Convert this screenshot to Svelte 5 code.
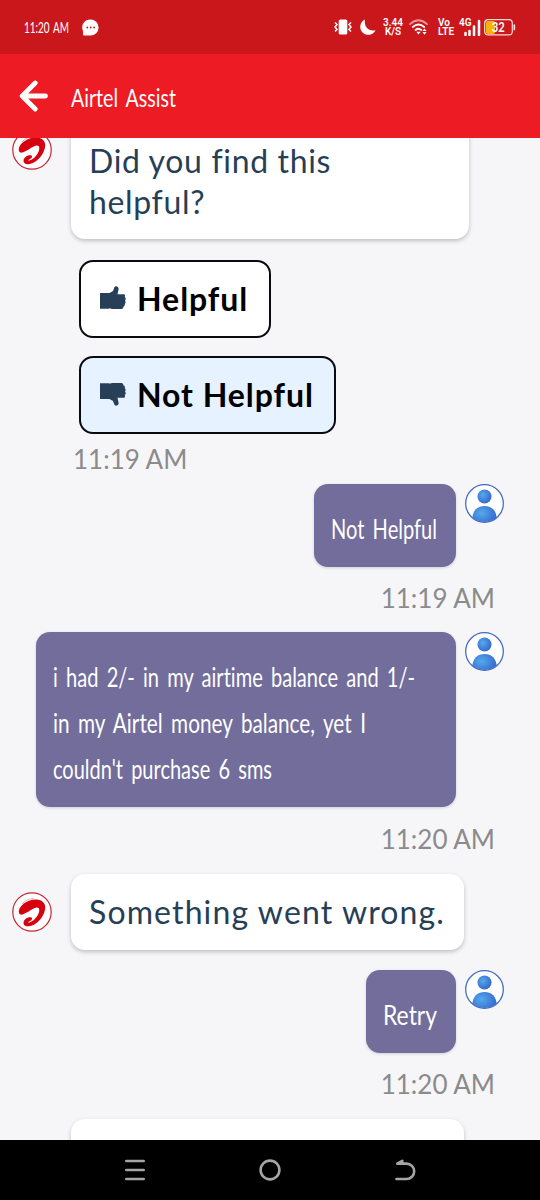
<script lang="ts">
	const narrow = { size: 26, height: 46 };
	const longMessage = [
		{ text: "i had 2/- in my airtime balance and 1/-", width: 362 },
		{ text: "in my Airtel money balance, yet I", width: 313 },
		{ text: "couldn't purchase 6 sms", width: 219 },
	];

	let helpful: boolean | null = $state(false);
</script>

{#snippet line(text: string, width: number, size: number, height: number)}
	<svg class="line" {width} {height}>
		<text
			x="0"
			y={height / 2 + size * 0.33}
			font-size={size}
			textLength={width}
			lengthAdjust="spacingAndGlyphs">{text}</text
		>
	</svg>
{/snippet}

{#snippet airtel()}
	<svg class="avatar" viewBox="0 0 40 40">
		<circle cx="20" cy="20" r="19.2" fill="#fff" stroke="#c9242f" stroke-width="1.2" />
		<path
			d="M7.2 21.6C5.4 17.5 9.7 11.6 17 8.8C24.5 5.9 31.8 7.9 33 13.4C34.5 20.2 27.5 32.1 17.8 34.1C13.6 35 11 33.1 11.6 30C12.1 27.2 15.5 24.8 18.7 25.2C21.3 25.8 20 28.4 17.2 29.4C16 29.8 16 30.9 17.3 30.6C23.4 29 28.6 20.4 27 16.6C24.6 12.8 18 19.6 11.3 22.2C9.3 22.9 7.9 22.9 7.2 21.6Z"
			fill="#d6000f"
		/>
		<path d="M10 12C13 8.5 17 6.8 22 6.5" fill="none" stroke="#dd8990" stroke-width="0.7" />
	</svg>
{/snippet}

{#snippet person(id: string)}
	<svg class="avatar" viewBox="0 0 40 40">
		<defs>
			<radialGradient {id} cx="38%" cy="38%" r="65%">
				<stop offset="0" stop-color="#55aaea" />
				<stop offset="1" stop-color="#3568d0" />
			</radialGradient>
			<clipPath id="{id}-clip"><circle cx="20" cy="20" r="19" /></clipPath>
		</defs>
		<circle cx="20" cy="20" r="19.3" fill="#fff" />
		<g clip-path="url(#{id}-clip)">
			<circle cx="20" cy="12.8" r="7.2" fill="url(#{id})" />
			<path d="M7.5 36C7.5 27 13 22.5 20 22.5S32.5 27 32.5 36V42H7.5Z" fill="url(#{id})" />
		</g>
		<circle cx="20" cy="20" r="19.3" fill="none" stroke="#416bc4" stroke-width="1.3" />
	</svg>
{/snippet}

{#snippet thumb(down: boolean)}
	<svg class="thumb" class:down viewBox="0 0 26 24">
		<path
			d="M0 7H9.5L13 5L14.3 1.5C15 -.4 18.8 0 18.6 3.2L17.5 8.2H23.2C25.2 8.2 25.4 9.6 24.7 10.9C26 11.5 26 13.7 25 14.4C26 15.3 25.7 17.2 24.7 17.9C25.2 19.2 24.6 20.1 23.5 20.4C23.4 22.4 22.3 23 20.5 23H13C11 23 9.9 22 8.7 22.8H0Z"
			fill="#284057"
		/>
	</svg>
{/snippet}

<div class="phone">
	<div class="statusBar">
		<div class="clock">{@render line("11:20 AM", 45, 16, 24)}</div>
		<svg class="bubbleIcon" viewBox="0 0 17 17">
			<path d="M8.5.4A8.1 8.1 0 1 1 8.5 16.6H2Q1 16.6 1 15.6V12A8.1 8.1 0 0 1 8.5.4Z" fill="#fff" />
			<g fill="#ca171b">
				<circle cx="5.3" cy="8.5" r="0.9" />
				<circle cx="8.7" cy="8.5" r="0.9" />
				<circle cx="12.1" cy="8.5" r="0.9" />
			</g>
		</svg>
		<div class="space"></div>
		<svg class="vibrate" viewBox="0 0 18 16">
			<rect x="4.7" y="0.5" width="8.6" height="15" rx="1.6" fill="#fff" />
			<path
				d="M1 3.5L3 5.5L1 8L3 10.5L1 12.5M17 3.5L15 5.5L17 8L15 10.5L17 12.5"
				fill="none"
				stroke="#fff"
				stroke-width="1.5"
			/>
		</svg>
		<svg class="moon" viewBox="0 0 16 16">
			<path d="M5 .5A8 8 0 1 0 15.5 11.2C8.5 13 3.7 7.5 5 .5Z" fill="#fff" />
		</svg>
		<div class="stack speed"><span>3.44</span><span>K/S</span></div>
		<svg class="wifi" viewBox="0 0 19 16">
			<g fill="none" stroke="#fff" stroke-width="1.8" stroke-linecap="round">
				<path d="M1 5.2Q9.5-2.6 18 5.2" opacity=".55" />
				<path d="M3.8 8Q9.5 3 15.2 8M6.5 11Q9.5 8.5 12.3 11" />
			</g>
			<path d="M7.3 12.7H11.7L9.5 15.5ZM13.4 12L15.5 9.5L17.6 12ZM13.4 13H17.6L15.5 15.7Z" fill="#fff" />
		</svg>
		<div class="stack volte"><span>Vo</span><span>LTE</span></div>
		<div class="signal">
			<svg viewBox="0 0 22 17">
				<path
					d="M6.5 14V16M10.5 12V16M15 7.5V16M20 2V16"
					stroke="#fff"
					stroke-width="2.5"
					stroke-linecap="round"
				/>
			</svg>
			<span>4G</span>
		</div>
		<svg class="battery" viewBox="0 0 32 17">
			<rect x="2" y="2" width="9" height="13" rx="1.8" fill="#f9b208" />
			<rect
				x="0.7"
				y="0.7"
				width="27.6"
				height="15.2"
				rx="3.5"
				fill="none"
				stroke="#ffd9d9"
				stroke-width="1.2"
			/>
			<path d="M30.3 6V10.5" stroke="#ffd9d9" stroke-width="1.7" stroke-linecap="round" />
			<text x="7.8" y="13" font-size="13" textLength="13" lengthAdjust="spacingAndGlyphs">32</text>
		</svg>
	</div>

	<header class="titleBar">
		<button class="back" aria-label="Back">
			<svg viewBox="0 0 30 32">
				<path
					d="M16.2 3L3.2 16L16.2 29M4 16H26.5"
					fill="none"
					stroke="#fff"
					stroke-width="4.8"
					stroke-linecap="round"
					stroke-linejoin="round"
				/>
			</svg>
		</button>
		{@render line("Airtel Assist", 105, 25, 40)}
	</header>

	<main class="chat">
		<div class="row bot question">
			{@render airtel()}
			<div class="card">Did you find this<br />helpful?</div>
		</div>

		<div class="choices">
			<button class="choice" class:picked={helpful === true} onclick={() => (helpful = true)}>
				{@render thumb(false)}<span>Helpful</span>
			</button>
			<button class="choice" class:picked={helpful === false} onclick={() => (helpful = false)}>
				{@render thumb(true)}<span>Not Helpful</span>
			</button>
		</div>
		<time class="left">11:19 AM</time>

		<div class="row user short">
			<div class="bubble">{@render line("Not Helpful", 106, narrow.size, narrow.height)}</div>
			{@render person("p1")}
		</div>
		<time>11:19 AM</time>

		<div class="row user long">
			<div class="bubble">
				{#each longMessage as part}
					{@render line(part.text, part.width, narrow.size, narrow.height)}
				{/each}
			</div>
			{@render person("p2")}
		</div>
		<time>11:20 AM</time>

		<div class="row bot error">
			{@render airtel()}
			<div class="card">Something went wrong.</div>
		</div>

		<div class="row user retry">
			<div class="bubble">{@render line("Retry", 54, narrow.size, narrow.height)}</div>
			{@render person("p3")}
		</div>
		<time>11:20 AM</time>

		<div class="card next"></div>
	</main>

	<nav class="navBar">
		<svg viewBox="0 0 24 24">
			<path d="M3.3 3H20.7M3.3 12H20.7M3.3 21H20.7" />
		</svg>
		<svg viewBox="0 0 24 24">
			<circle cx="12" cy="12" r="9.4" />
		</svg>
		<svg viewBox="0 0 24 24">
			<path d="M3.5 21H13.5A7.7 7.7 0 0 0 13.5 5.6H4.2L9.3 2.8V5" />
		</svg>
	</nav>
</div>

<style>
	:global(body) {
		margin: 0;
		background: #f6f6f9;
	}

	.phone {
		width: 540px;
		height: 1200px;
		display: flex;
		flex-direction: column;
		overflow: hidden;

		font-family: Lato, sans-serif;
		background: #f6f6f9;
	}

	svg {
		display: block;
		flex: none;
	}

	button {
		font: inherit;
		padding: 0;
		cursor: pointer;
	}

	.line {
		overflow: visible;
		word-spacing: 4px;
		font-variant-ligatures: none;
	}

	.line text,
	.battery text {
		fill: #fff;
	}

	.battery text {
		font-weight: 700;
	}

	.statusBar {
		height: 54px;
		flex: none;
		box-sizing: border-box;
		padding: 0 24px;
		display: flex;
		align-items: center;

		color: #fff;
		background: #ca171b;
	}

	.clock {
		width: 58px;
		padding-top: 2px;
	}

	.clock .line {
		word-spacing: 2px;
	}

	.bubbleIcon {
		width: 17px;
		height: 17px;
	}

	.space {
		flex: 1;
	}

	.vibrate {
		width: 18px;
		height: 16px;
		margin-right: 8px;
	}

	.moon {
		width: 16px;
		height: 16px;
		margin-right: 7px;
	}

	.stack {
		display: flex;
		flex-direction: column;
		align-items: center;

		font-family: Roboto, sans-serif;
		font-size: 10px;
		font-weight: 600;
		line-height: 9px;
	}

	.speed {
		width: 20px;
		margin-right: 6px;
	}

	.wifi {
		width: 19px;
		height: 16px;
		margin-right: 10px;
	}

	.volte {
		width: 16px;
		align-items: flex-start;
		margin-right: 5px;
	}

	.signal {
		width: 22px;
		height: 17px;
		margin-right: 3px;
		position: relative;
	}

	.signal span {
		position: absolute;
		top: -2px;
		left: 0;

		font-family: Roboto, sans-serif;
		font-size: 10px;
		font-weight: 600;
		line-height: 11px;
	}

	.battery {
		width: 32px;
		height: 17px;
	}

	.titleBar {
		height: 84px;
		flex: none;
		box-sizing: border-box;
		padding: 0 19px;
		display: flex;
		align-items: center;

		background: #ed1c24;
	}

	.titleBar .line {
		margin-top: 6px;
	}

	.back {
		width: 52px;
		border: none;
		background: transparent;
	}

	.back svg {
		width: 30px;
		height: 32px;
	}

	.chat {
		height: 1002px;
		flex: none;
		display: flex;
		flex-direction: column;
		overflow: hidden;
	}

	.row {
		flex: none;
		display: flex;
	}

	.bot {
		align-items: center;
		gap: 19px;
		padding-left: 12px;
	}

	.user {
		justify-content: flex-end;
		gap: 9px;
		padding-right: 36px;
	}

	.avatar {
		width: 40px;
		height: 40px;
	}

	.user .avatar {
		width: 39px;
		height: 39px;
	}

	.card {
		box-sizing: border-box;
		height: 76px;
		padding: 17px 18px;
		border-radius: 14px;

		color: #263f56;
		font-size: 32px;
		line-height: 41px;
		letter-spacing: 1.13px;
		white-space: nowrap;
		background: #fff;
		box-shadow: 0 2px 4px rgba(0, 0, 0, 0.22);
	}

	.question {
		margin-top: -78px;
	}

	.question .card {
		width: 398px;
		height: 179px;
		padding-top: 80px;
		letter-spacing: 0.65px;
	}

	.choices {
		margin: 21px 0 0 79px;
		display: flex;
		flex-direction: column;
		align-items: flex-start;
		gap: 18px;
	}

	.choice {
		width: 192px;
		height: 78px;
		box-sizing: border-box;
		padding: 0 0 2px 19px;
		display: flex;
		align-items: center;
		gap: 11px;

		border: 2px solid #090b10;
		border-radius: 14px;

		color: #000;
		font-size: 32px;
		font-weight: 700;
		letter-spacing: 0.95px;
		white-space: nowrap;
		background: #fff;
	}

	.choice + .choice {
		width: 257px;
	}

	.picked {
		background: #e6f2ff;
	}

	.thumb {
		width: 26px;
		height: 24px;
	}

	.down {
		transform: scaleY(-1);
	}

	time {
		height: 30px;
		flex: none;
		margin-right: 45px;
		text-align: right;

		color: #8b8b8c;
		font-size: 26px;
		line-height: 30px;
	}

	.left {
		margin: 10px 0 0 73px;
		text-align: left;
	}

	.bubble {
		box-sizing: border-box;
		padding: 23px 17px 0;
		border-radius: 14px;
		background: #726d9b;
		box-shadow: 0 1px 3px rgba(60, 50, 90, 0.2);
	}

	.short {
		height: 83px;
		margin: 10px 0 16px;
	}

	.short .bubble {
		width: 142px;
	}

	.long {
		height: 175px;
		margin: 19px 0 17px;
	}

	.long .bubble {
		width: 420px;
	}

	.error {
		margin: 20px 0;
	}

	.error .card {
		width: 393px;
	}

	.retry {
		height: 83px;
		margin-bottom: 16px;
	}

	.retry .bubble {
		width: 90px;
	}

	.next {
		width: 393px;
		flex: none;
		margin: 20px 0 0 71px;
	}

	.navBar {
		height: 60px;
		flex: none;
		padding-left: 123px;
		display: flex;
		align-items: center;
		gap: 111px;

		background: #000;
	}

	.navBar svg {
		width: 24px;
		height: 24px;
		fill: none;
		stroke: #a5a5a5;
		stroke-width: 2.6;
		stroke-linecap: round;
		stroke-linejoin: round;
	}
</style>
